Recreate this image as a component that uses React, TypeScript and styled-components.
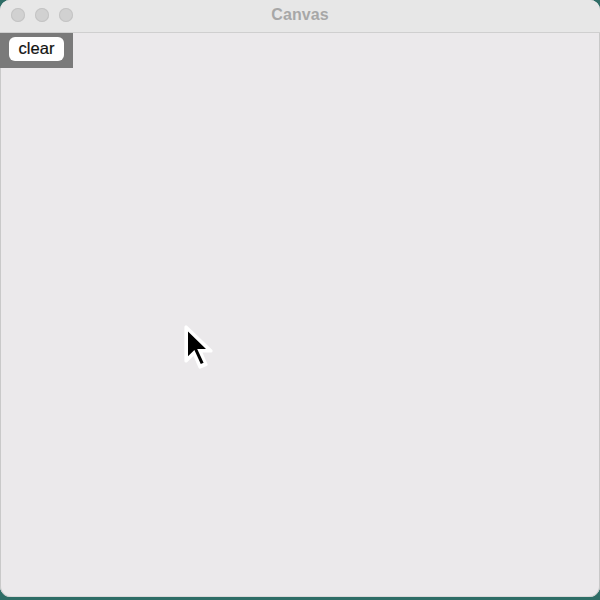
import React from "react";
import styled, { createGlobalStyle } from "styled-components";

const Global = createGlobalStyle`
  html, body { margin: 0; padding: 0; background: #2e6d66; }
  body { width: 600px; height: 600px; overflow: hidden; font-family: "Helvetica Neue", "Liberation Sans", Arial, sans-serif; }
`;

const Desktop = styled.div`
  width: 600px;
  height: 600px;
  background: #2e6d66;
  display: flex;
  flex-direction: column;
`;

const Window = styled.div`
  position: relative;
  width: 600px;
  height: 597px;
  border-radius: 10px 10px 11px 11px;
  background: #ebe9eb;
  overflow: hidden;
  display: flex;
  flex-direction: column;
  box-shadow: inset 1px 0 0 #c9c9c9, inset -1px 0 0 #c9c9c9, inset 0 -1px 0 #d9d9d9;
`;

const TitleBar = styled.div`
  position: relative;
  height: 32px;
  flex: none;
  background: #e7e7e7;
  border-bottom: 1px solid #cfcfcf;
  display: flex;
  align-items: center;
  justify-content: center;
`;

const Lights = styled.div`
  position: absolute;
  left: 11px;
  top: 8px;
  display: flex;
  gap: 10px;
`;

const Light = styled.span`
  width: 14px;
  height: 14px;
  border-radius: 50%;
  background: #d1d1d1;
  box-shadow: inset 0 0 0 1px #c4c4c4;
`;

const Title = styled.div`
  font-size: 16px;
  font-weight: 700;
  color: #a7a7a7;
  letter-spacing: 0.1px;
  margin-top: -2px;
`;

const Content = styled.div`
  flex: 1;
  position: relative;
  display: flex;
  flex-direction: column;
  align-items: flex-start;
`;

const Toolbar = styled.div`
  width: 73px;
  height: 35px;
  background: #7a7a7a;
  display: flex;
  align-items: flex-start;
  padding: 4px 0 0 9px;
  box-sizing: border-box;
`;

const Button = styled.button`
  width: 55px;
  height: 24px;
  border: none;
  border-radius: 6px;
  background: #ffffff;
  color: #111;
  font-family: "Helvetica Neue", "Liberation Sans", Arial, sans-serif;
  font-size: 16.5px;
  padding: 0 0 1px;
  display: flex;
  align-items: center;
  justify-content: center;
  -webkit-text-stroke: 0.2px #111;
`;

const Cursor = styled.svg`
  position: absolute;
  left: 182px;
  top: 292px;
`;

export default function App() {
  return (
    <>
      <Global />
      <Desktop>
        <Window>
          <TitleBar>
            <Lights>
              <Light />
              <Light />
              <Light />
            </Lights>
            <Title>Canvas</Title>
          </TitleBar>
          <Content>
            <Toolbar>
              <Button>clear</Button>
            </Toolbar>
            <Cursor width="34" height="44" viewBox="0 0 17 22">
              <path
                d="M2 1 L2 18 L6 14 L9 21 L12 19.8 L9 13 L14.5 13 Z"
                fill="#fff"
                stroke="#fff"
                strokeWidth="1.6"
                strokeLinejoin="round"
              />
              <path d="M3 3.3 L3 15.6 L6.2 12.5 L9.4 19.5 L10.8 18.9 L7.6 12 L12 12 Z" fill="#000" />
            </Cursor>
          </Content>
        </Window>
      </Desktop>
    </>
  );
}
